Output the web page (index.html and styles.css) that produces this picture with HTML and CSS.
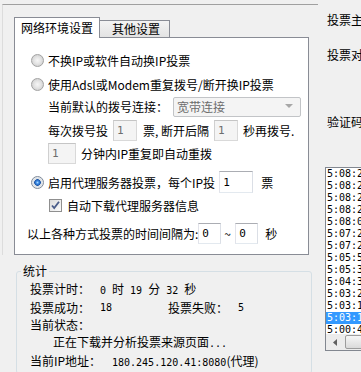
FILE: index.html
```html
<!DOCTYPE html>
<html lang="zh-CN">
<head>
    <meta charset="UTF-8">
    <meta name="viewport" content="width=device-width, initial-scale=1.0">
    <title>投票设置</title>
    <link rel="stylesheet" href="styles.css">
</head>
<body>
    <div class="window">
        <div class="left">
            <div class="frame">
                <div class="tabs">
                    <div class="tab tab-active">网络环境设置</div>
                    <div class="tab tab-other">其他设置</div>
                </div>
                <div class="tab-panel">
                    <div class="row row-1">
                        <span class="radio"></span>
                        <span>不换IP或软件自动换IP投票</span>
                    </div>
                    <div class="row row-2">
                        <span class="radio"></span>
                        <span>使用Adsl或Modem重复拨号/断开换IP投票</span>
                    </div>
                    <div class="row row-3 sub">
                        <span>当前默认的拨号连接：</span>
                        <div class="select">
                            <span>宽带连接</span>
                            <svg width="8" height="5" viewBox="0 0 8 5"><path d="M0 0h8L4 4z" fill="#a7a7a7"/></svg>
                        </div>
                    </div>
                    <div class="row row-4 sub">
                        <span>每次拨号投</span>
                        <input class="box box-off box-24" type="text" value="1" disabled>
                        <span class="after-box">票, 断开后隔</span>
                        <input class="box box-off box-24" type="text" value="1" disabled>
                        <span>秒再拨号.</span>
                    </div>
                    <div class="row row-5 sub">
                        <input class="box box-off box-28" type="text" value="1" disabled>
                        <span>分钟内IP重复即自动重拨</span>
                    </div>
                    <div class="row row-6">
                        <span class="radio radio-on"></span>
                        <span>启用代理服务器投票，每个IP投</span>
                        <input class="box box-34" type="text" value="1">
                        <span class="unit">票</span>
                    </div>
                    <div class="row row-7">
                        <span class="check">
                            <svg width="11" height="11" viewBox="0 0 11 11"><path d="M2 5.5l2.2 2.6L9 1.8" fill="none" stroke="#4a5d8a" stroke-width="1.8"/></svg>
                        </span>
                        <span>自动下载代理服务器信息</span>
                    </div>
                    <div class="row row-8">
                        <span>以上各种方式投票的时间间隔为:</span>
                        <input class="box box-23 gap-l" type="text" value="0">
                        <span class="tilde">~</span>
                        <input class="box box-23" type="text" value="0">
                        <span class="unit-sec">秒</span>
                    </div>
                </div>
            </div>
            <fieldset class="stats">
                <legend>统计</legend>
                <div class="stat-row">
                    <span class="key">投票计时：</span>
                    <span><span class="n">0 </span>时<span class="n"> 19 </span>分<span class="n"> 32 </span>秒</span>
                </div>
                <div class="stat-row">
                    <span class="key">投票成功：</span>
                    <span class="n val">18</span>
                    <span class="key">投票失败：</span>
                    <span class="n">5</span>
                </div>
                <div class="stat-row">
                    <span>当前状态：</span>
                </div>
                <div class="stat-row status">
                    <span>正在下载并分析投票来源页面<span class="n">...</span></span>
                </div>
                <div class="stat-row">
                    <span class="key key-ip">当前IP地址：</span>
                    <span><span class="n">180.245.120.41:8080</span>(代理)</span>
                </div>
            </fieldset>
        </div>
        <div class="right">
            <div class="label label-1">投票主</div>
            <div class="label label-2">投票对</div>
            <div class="label label-3">验证码</div>
            <div class="list">
                <div class="list-items">
                    <div class="item">5:08:26</div>
                    <div class="item">5:08:24</div>
                    <div class="item">5:08:21</div>
                    <div class="item">5:08:20</div>
                    <div class="item">5:08:05</div>
                    <div class="item">5:07:29</div>
                    <div class="item">5:07:21</div>
                    <div class="item">5:05:58</div>
                    <div class="item">5:05:33</div>
                    <div class="item">5:04:37</div>
                    <div class="item">5:03:28</div>
                    <div class="item">5:03:15</div>
                    <div class="item item-selected">5:03:12</div>
                    <div class="item">5:00:45</div>
                </div>
                <div class="hscroll">
                    <div class="arrow">
                        <svg width="4" height="7" viewBox="0 0 4 7"><path d="M4 0v7L0 3.5z" fill="#606060"/></svg>
                    </div>
                    <div class="thumb"></div>
                </div>
            </div>
        </div>
    </div>
</body>
</html>
```

FILE: styles.css
```css
body {
    margin: 0;
    width: 361px;
    height: 372px;
    overflow: hidden;
    background: #f0f0f0;
    font-family: "Noto Sans CJK SC", sans-serif;
    font-size: 12px;
    color: #000;
}
.window {
    display: flex;
    height: 372px;
}
.left {
    width: 318px;
    flex: none;
}
.frame {
    margin: 4px 0 0 2px;
    border-top: 1px solid #a0a0a0;
    border-left: 1px solid #dcdcdc;
    padding: 12px 0 0 11px;
}

/* tabs */
.tabs {
    display: flex;
    align-items: flex-end;
    height: 20px;
}
.tab {
    box-sizing: border-box;
    height: 17px;
    line-height: 15px;
    border: 1px solid #898c95;
    border-bottom: none;
    background: linear-gradient(#f3f3f3, #e3e3e3);
}
.tab-active {
    position: relative;
    z-index: 1;
    height: 21px;
    margin-bottom: -1px;
    line-height: 19px;
    padding: 0 6px;
    background: #fff;
}
.tab-other {
    border-left: none;
    padding: 0 9px 0 12px;
}
.tab-panel {
    box-sizing: border-box;
    width: 295px;
    height: 218px;
    padding: 12px 0 0 16px;
    border: 1px solid #898c95;
    background: #fff;
}

/* rows inside the panel */
.row {
    display: flex;
    align-items: center;
    height: 20px;
    gap: 4px;
    white-space: nowrap;
}
.row-2 { margin-top: 4px; }
.row-3 { margin-top: 2px; height: 21px; gap: 5px; }
.row-4 { margin-top: 3px; height: 21px; gap: 5px; }
.row-5 { margin-top: 2px; height: 21px; gap: 5px; }
.row-6 { margin-top: 7px; height: 22px; }
.row-7 { margin-top: 2px; margin-left: 18px; gap: 5px; }
.row-8 { margin-top: 7px; height: 22px; margin-left: -4px; gap: 0; }
.sub {
    margin-left: 17px;
}
.after-box {
    margin-left: 1px;
}
.unit {
    margin-left: 4px;
}
.tilde {
    margin: 0 4px 0 3px;
    width: 7px;
}
.unit-sec {
    margin-left: 7px;
}
.gap-l {
    margin-left: 6px;
}

.radio {
    flex: none;
    box-sizing: border-box;
    width: 13px;
    height: 13px;
    border-radius: 50%;
    border: 1px solid #a2a2a2;
    background: radial-gradient(circle, #f6f6f6 0, #e6e6e6 3px, #d2d2d2 6px);
}
.radio-on {
    border-color: #7f8a99;
    background: radial-gradient(circle, #a8d8ff 0, #3b8be6 1.5px, #1d56a8 3px, #d9dfe6 3.6px, #eceeef 6px);
}
.check {
    flex: none;
    box-sizing: border-box;
    width: 13px;
    height: 13px;
    border: 1px solid #8f8f8f;
    background: linear-gradient(135deg, #dcdcdc, #fbfbfb);
    display: flex;
    align-items: center;
    justify-content: center;
}

.box {
    box-sizing: border-box;
    height: 21px;
    margin: 0;
    padding: 0 0 0 3px;
    border: 1px solid #abadb3;
    border-color: #abadb3 #dbdfe6 #e3e9ef #e2e3ea;
    background: #fff;
    font-family: "DejaVu Sans Mono", monospace;
    font-size: 11px;
    color: #000;
    outline: none;
}
.box-off {
    background: #f4f4f4;
    border-color: #c5c5c5 #d9d9d9 #d9d9d9 #d0d0d0;
    color: #6d6d6d;
    -webkit-text-fill-color: #6d6d6d;
}
.box-23 { width: 23px; }
.box-24 { width: 24px; }
.box-28 { width: 28px; }
.box-34 { width: 34px; height: 22px; }

.select {
    box-sizing: border-box;
    width: 128px;
    height: 20px;
    display: flex;
    align-items: center;
    justify-content: space-between;
    padding: 0 7px 0 3px;
    border: 1px solid #c2c4c7;
    border-radius: 2px;
    background: #f4f4f4;
    color: #6d6d6d;
}

/* stats group */
.stats {
    box-sizing: border-box;
    width: 296px;
    margin: 9px 0 0 16px;
    padding: 2px 0 2px 13px;
    border: 1px solid #d5dfe5;
    border-radius: 3px;
    min-width: 0;
}
.stats legend {
    padding: 0 2px;
    margin-left: -9px;
    line-height: 14px;
}
.stat-row {
    display: flex;
    line-height: 17px;
    white-space: pre;
}
.key {
    width: 70px;
}
.key-ip {
    width: 82px;
}
.val {
    width: 68px;
}
.status {
    padding-left: 23px;
}
.n {
    font-family: "DejaVu Sans Mono", monospace;
    font-size: 10px;
}

/* right column */
.right {
    flex: 1;
    padding-left: 9px;
    white-space: nowrap;
}
.label {
    line-height: 14px;
}
.label-1 { margin-top: 13px; }
.label-2 { margin-top: 21px; }
.label-3 { margin-top: 53px; }
.list {
    box-sizing: border-box;
    width: 60px;
    height: 184px;
    margin: 38px 0 0 -2px;
    border: 1px solid #828790;
    background: #fff;
}
.list-items {
    height: 166px;
    overflow: hidden;
}
.item {
    height: 12px;
    line-height: 12px;
    padding-left: 1px;
    font-family: "DejaVu Sans Mono", monospace;
    font-size: 10px;
}
.item-selected {
    background: #3399ff;
    color: #fff;
}
.hscroll {
    display: flex;
    height: 16px;
    background: #ececec;
}
.arrow {
    width: 17px;
    display: flex;
    align-items: center;
    justify-content: center;
}
.thumb {
    flex: 1;
    margin: 1px 0 1px 2px;
    border: 1px solid #9c9c9c;
    border-radius: 2px;
    background: linear-gradient(#f6f6f6, #dadada);
}
```
